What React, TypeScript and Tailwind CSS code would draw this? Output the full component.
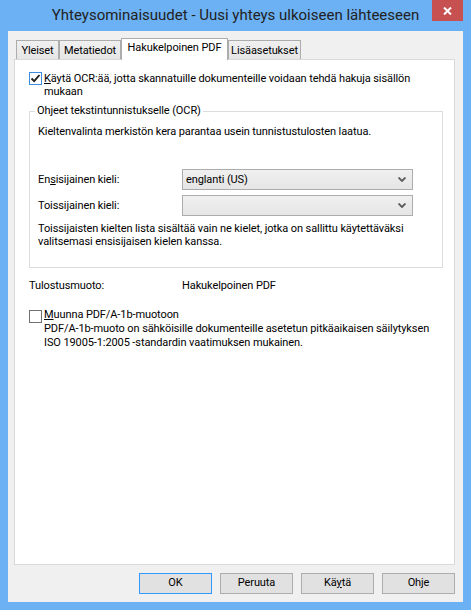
import React from "react";

const font = { fontFamily: 'Roboto, "Noto Sans", sans-serif' };

function Chevron() {
  return (
    <svg width="8" height="5" viewBox="0 0 8 5" className="block">
      <path d="M0.5 0.5 L4 4 L7.5 0.5" fill="none" stroke="#5a5a5a" strokeWidth="1.8" />
    </svg>
  );
}

function Checkbox({ checked, blue }: { checked?: boolean; blue?: boolean }) {
  return (
    <div
      className={`w-[13px] h-[13px] shrink-0 bg-white border flex items-center justify-center ${
        blue ? "border-[#3c8ce0]" : "border-[#707070]"
      }`}
    >
      {checked && (
        <svg width="11" height="11" viewBox="0 0 11 11" className="block">
          <path d="M1.5 5.5 L4.2 8.2 L9.5 2" fill="none" stroke="#212121" strokeWidth="1.9" />
        </svg>
      )}
    </div>
  );
}

function Select({ value }: { value?: string }) {
  return (
    <div className="w-[231px] h-[21px] border border-[#acacac] bg-gradient-to-b from-[#f0f0f0] to-[#e5e5e5] flex items-center justify-between pl-[3px] pr-[6px]">
      <span className="text-black">{value}</span>
      <Chevron />
    </div>
  );
}

function Tab({ label, width, active }: { label: string; width: number; active?: boolean }) {
  if (active) {
    return (
      <div
        className="h-[22px] bg-white border border-b-0 border-[#acacac] flex items-center justify-center relative z-10 pb-[3px] whitespace-nowrap"
        style={{ width }}
      >
        {label}
      </div>
    );
  }
  return (
    <div
      className="h-[20px] mt-[2px] bg-gradient-to-b from-[#f0f0f0] to-[#e5e5e5] border border-b-0 border-[#acacac] flex items-center justify-center pt-[1px] whitespace-nowrap"
      style={{ width }}
    >
      {label}
    </div>
  );
}

function Button({ label, primary }: { label: React.ReactNode; primary?: boolean }) {
  return (
    <div
      className={`w-[73px] h-[21px] border flex items-center justify-center bg-[#e1e1e1] ${
        primary ? "border-[#3399ff]" : "border-[#adadad]"
      }`}
    >
      {label}
    </div>
  );
}

export default function App() {
  return (
    <div
      className="w-[471px] h-[610px] bg-[#6bb1f4] flex flex-col text-black text-[11px] tracking-[-0.1px] whitespace-nowrap"
      style={font}
    >
      {/* title bar */}
      <div className="h-[31px] flex relative">
        <div className="flex-1 flex items-center justify-center pb-[1px] text-[15px] tracking-normal text-[#222]">
          Yhteysominaisuudet - Uusi yhteys ulkoiseen lähteeseen
        </div>
        <div className="absolute right-[8px] top-0 w-[31px] h-[21px] bg-[#c75050] flex items-center justify-center">
          <svg width="9" height="8" viewBox="0 0 9 8">
            <path d="M1 0.5 L8 7.5 M8 0.5 L1 7.5" stroke="white" strokeWidth="2" />
          </svg>
        </div>
      </div>

      {/* client */}
      <div className="mx-[8px] h-[571px] bg-[#f0f0f0] flex flex-col pl-[6px] pr-[8px] pt-[7px]">
        <div className="flex items-start pl-[2px] h-[22px]">
          <Tab label="Yleiset" width={43} />
          <Tab label="Metatiedot" width={62} />
          <Tab label="Hakukelpoinen PDF" width={107} active />
          <Tab label="Lisäasetukset" width={73} />
        </div>
        <div className="h-[506px] -mt-px bg-white border border-[#d9d9d9] pl-[14px] pt-[12px]">
          <div className="flex gap-[2px]">
            <Checkbox checked blue />
            <div className="leading-[13px]">
              <span className="underline">K</span>äytä OCR:ää, jotta skannatuille dokumenteille voidaan tehdä hakuja sisällön
              <br />
              mukaan
            </div>
          </div>

          <div className="relative mt-[13px] w-[414px] h-[157px] border border-[#dcdcdc]">
            <div className="absolute -top-[8px] left-[5px] bg-white px-[2px] leading-[14px]">
              Ohjeet tekstintunnistukselle (OCR)
            </div>
            <div className="pl-[8px] pt-[13px] leading-[13px]">
              <div>Kieltenvalinta merkistön kera parantaa usein tunnistustulosten laatua.</div>
              <div className="mt-[31px] flex flex-col gap-[5px]">
                <div className="flex items-center">
                  <div className="w-[144px]">
                    En<span className="underline">s</span>isijainen kieli:
                  </div>
                  <Select value="englanti (US)" />
                </div>
                <div className="flex items-center">
                  <div className="w-[144px]">
                    Toissi<span className="underline">j</span>ainen kieli:
                  </div>
                  <Select />
                </div>
              </div>
              <div className="mt-[6px]">
                Toissijaisten kielten lista sisältää vain ne kielet, jotka on sallittu käytettäväksi
                <br />
                valitsemasi ensisijaisen kielen kanssa.
              </div>
            </div>
          </div>

          <div className="flex mt-[11px] leading-[13px]">
            <div className="w-[153px]">Tulostusmuoto:</div>
            <div>Hakukelpoinen PDF</div>
          </div>

          <div className="flex gap-[2px] mt-[18px]">
            <Checkbox />
            <div className="leading-[14px] -mt-[2px]">
              <div>
                <span className="underline">M</span>uunna PDF/A-1b-muotoon
              </div>
              <div>PDF/A-1b-muoto on sähköisille dokumenteille asetetun pitkäaikaisen säilytyksen</div>
              <div>ISO 19005-1:2005 -standardin vaatimuksen mukainen.</div>
            </div>
          </div>
        </div>

        <div className="flex justify-end gap-[8px] mt-[8px]">
          <Button label="OK" primary />
          <Button label="Peruuta" />
          <Button
            label={
              <>
                Kä<span className="underline">y</span>tä
              </>
            }
          />
          <Button label="Ohje" />
        </div>
      </div>
    </div>
  );
}
